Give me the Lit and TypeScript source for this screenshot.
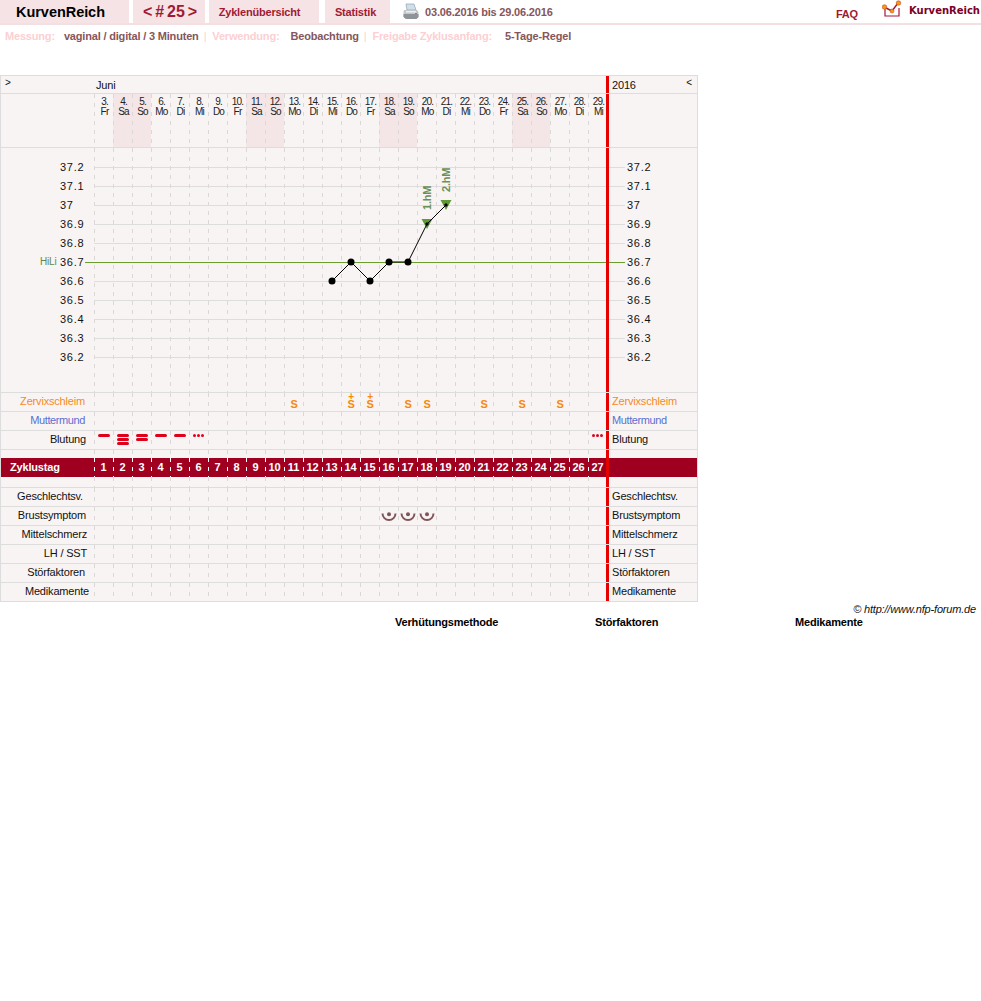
import {LitElement, html, svg, css, nothing} from 'lit';
import {customElement} from 'lit/decorators.js';

const DAY_NAMES = ['Fr', 'Sa', 'So', 'Mo', 'Di', 'Mi', 'Do'];
const COL = 19;
const COL_X = 94;

// the cycle runs from the 3rd to the 29th of june
const days = Array.from({length: 27}, (_, i) => ({
    cycle: i + 1,
    date: i + 3,
    name: DAY_NAMES[i % 7],
    weekend: i % 7 === 1 || i % 7 === 2,
}));

const temps = ['37.2', '37.1', '37', '36.9', '36.8', '36.7', '36.6', '36.5', '36.4', '36.3', '36.2'];
const tempY = (i: number) => 167 + i * COL;
const colCenter = (cycle: number) => COL_X + (cycle - 1) * COL + 10;

const curve: [number, number][] = [[13, 6], [14, 5], [15, 6], [16, 5], [17, 5], [18, 3], [19, 2]];
const slime: Record<number, boolean> = {11: false, 14: true, 15: true, 17: false, 18: false, 21: false, 23: false, 25: false};
const bleeding: Record<number, number | 'spot'> = {1: 1, 2: 3, 3: 2, 4: 1, 5: 1, 6: 'spot', 27: 'spot'};

const lowerRows = [
    {name: 'Geschlechtsv.', pad: 10},
    {name: 'Brustsymptom', pad: 7, marks: [16, 17, 18]},
    {name: 'Mittelschmerz', pad: 6},
    {name: 'LH / SST', pad: 6},
    {name: 'Störfaktoren', pad: 8},
    {name: 'Medikamente', pad: 4},
];

@customElement('app-root')
export class AppRoot extends LitElement {
    static styles = css`
        :host {
            display: block;
            font-family: "Liberation Sans", Arial, sans-serif;
            font-size: 11px;
            letter-spacing: -0.18px;
            color: #111;
            background: #fff;
        }

        .top {
            display: flex;
            height: 23px;
            border-bottom: 2px solid #f3e0e3;
        }

        .tab {
            display: flex;
            align-items: center;
            justify-content: center;
            background: #f5e3e6;
            font-weight: bold;
            color: #a01a33;
        }

        .brand { width: 129px; margin-right: 4px; color: #000; font-size: 14.5px; letter-spacing: -0.05px; padding-right: 8px; box-sizing: border-box; }
        .cycle { width: 72px; margin-right: 4px; padding-left: 2px; box-sizing: border-box; font-size: 16px; letter-spacing: 0; word-spacing: -1.5px; }
        .overview { width: 110px; margin-right: 6px; padding-right: 9px; box-sizing: border-box; }
        .stats { width: 65px; padding-right: 4px; box-sizing: border-box; }

        .printer { margin: 3px 0 0 13px; }

        .range {
            margin-left: 6px;
            line-height: 24px;
            font-weight: bold;
            color: #85565c;
        }

        .faq {
            margin-left: auto;
            line-height: 29px;
            font-weight: bold;
            color: #a01a33;
        }

        .logo { margin: 0 0 0 24px; }

        .logoText {
            margin: 0 1px 0 7px;
            line-height: 21px;
            font-family: "DejaVu Sans", sans-serif;
            font-size: 10px;
            letter-spacing: 0;
            font-weight: bold;
            color: #7b0025;
        }

        .meta {
            display: flex;
            height: 50px;
            padding: 5px 0 0 5px;
            box-sizing: border-box;
            line-height: 13px;
            font-weight: bold;
            color: #85565c;
        }

        .metaLabel { color: #fcd0d2; margin-right: 9px; }
        .metaLabel.wide { margin-right: 11px; }
        .metaLabel.widest { margin-right: 13px; }
        .pipe { color: #fcd0d2; font-weight: normal; margin: 0 6px 0 5px; }

        .chart {
            width: 698px;
            box-sizing: border-box;
            background: #f9f4f4;
            border: 1px solid #ddd;
            border-width: 1px 1px 0;
        }

        .row {
            display: flex;
            height: 19px;
            box-sizing: border-box;
            border-bottom: 1px solid #ddd;
            line-height: 17px;
        }

        .months { height: 18px; line-height: 18px; }
        .dates { height: 54px; }
        .spacer { height: 8px; border-bottom: 0; }
        .spacerLow { height: 11px; }
        .plot { display: block; height: 245px; }
        .plot svg { display: block; }

        .label {
            flex: 0 0 93px;
            box-sizing: border-box;
            text-align: right;
        }

        .arrow { padding-left: 4px; text-align: left; line-height: 14px; font-size: 10px; }

        .days {
            flex: 0 0 512px;
            display: flex;
            overflow: hidden;
        }

        .month { padding-left: 2px; }

        .cell {
            flex: 0 0 19px;
            box-sizing: border-box;
            background: linear-gradient(#dbd8d8 0 4px, transparent 4px) 0 0 / 1px 9px repeat-y;
        }

        .date {
            padding: 3px 0 0 2px;
            text-align: center;
            font-size: 10px;
            line-height: 10px;
            letter-spacing: -0.8px;
            color: #222;
        }

        .weekend { background-color: #f4e5e7; }

        .red {
            flex: 0 0 3px;
            background: #e60000;
        }

        .right {
            flex: 1;
            display: flex;
            justify-content: space-between;
            padding: 0 5px 0 3px;
        }

        .orange { color: #f58a1f; }
        .blue { color: #5a6fd0; letter-spacing: -0.4px; }

        .slime {
            display: flex;
            flex-direction: column;
            align-items: center;
            justify-content: flex-end;
            padding: 0 0 2px 1px;
            font-weight: bold;
            color: #f58a0b;
        }

        .slime b { font-size: 10px; line-height: 7px; }
        .slime span { line-height: 9px; }

        .blood {
            display: flex;
            flex-direction: column;
            gap: 1px;
            padding: 3px 0 0 4px;
        }

        .bar {
            width: 12px;
            height: 3px;
            border-radius: 2px;
            background: #e0001a;
        }

        .spots { display: flex; gap: 1px; }
        .spots i { width: 3px; height: 3px; border-radius: 50%; background: #e0001a; }

        .breast { display: block; }

        .cycleBar {
            border-bottom: 0;
            background: #a00020;
            color: #fff;
            font-weight: bold;
            line-height: 19px;
        }

        .cycleBar .label { padding-left: 9px; text-align: left; }

        .cycleBar .cell {
            text-align: center;
            background-image: linear-gradient(#fff 0 4px, transparent 4px);
        }

        .credit {
            padding: 1px 5px 0 0;
            line-height: 12px;
            text-align: right;
            font-style: italic;
        }

        .legend {
            display: flex;
            padding: 1px 0 0 395px;
            line-height: 13px;
            font-weight: bold;
            color: #000;
        }

        .legend div { flex: 0 0 200px; }

        .tick { font-size: 11px; letter-spacing: 0.7px; fill: #111; }
    `;

    renderPlot() {
        const lines = days.map((_, i) => COL_X + i * COL + 0.5);
        const path = curve.map(([c, t]) => `${colCenter(c)},${tempY(t)}`).join(' ');
        return html`
            <svg width="696" height="244" viewBox="1 148 696 244">
                ${lines.map(x => svg`<line x1=${x} x2=${x} y1="148" y2="392" stroke="#dbd8d8" stroke-dasharray="4 5"/>`)}
                ${temps.map((t, i) => svg`
                    <line x1="94" x2="625" y1=${tempY(i) + 0.5} y2=${tempY(i) + 0.5}
                        stroke=${t === '36.7' ? 'none' : '#ddd'}/>
                    <text class="tick" x="60" y=${tempY(i) + 4}>${t}</text>
                    <text class="tick" x="627" y=${tempY(i) + 4}>${t}</text>
                `)}
                <line x1="85" x2="625" y1="262.5" y2="262.5" stroke="#6a9e2f"/>
                <text x="40" y="265" font-size="10" fill="#5f8a4a">HiLi</text>
                <rect x="606" y="148" width="3" height="244" fill="#e60000"/>
                <path d="M421.5 219h11l-5.500 10zM440.500 200h11l-5.500 10z" fill="#5f9a35"/>
                <polyline points=${path} fill="none" stroke="#000"/>
                ${curve.slice(0, 5).map(([c, t]) => svg`<circle cx=${colCenter(c)} cy=${tempY(t)} r="3.500" fill="#000"/>`)}
                <path d="M427 222l2 2-2 2-2-2zM446 203l2 2-2 2-2-2z" fill="#000"/>
                <text transform="translate(431 210) rotate(-90)" font-size="11" font-weight="bold" fill="#6a9058">1.hM</text>
                <text transform="translate(450 192) rotate(-90)" font-size="11" font-weight="bold" fill="#6a9058">2.hM</text>
            </svg>
        `;
    }

    renderBlood(cycle: number) {
        const mark = bleeding[cycle];
        if (!mark) return nothing;
        if (mark === 'spot') return html`<div class="spots"><i></i><i></i><i></i></div>`;
        return Array.from({length: mark}, () => html`<div class="bar"></div>`);
    }

    renderBreast() {
        return html`
            <svg class="breast" width="19" height="18" viewBox="0 0 19 18">
                <path d="M3.500 6.500A6.500 6.500 0 0 0 16.500 6.500" fill="none" stroke="#80555a" stroke-width="2"/>
                <circle cx="10" cy="7.300" r="2" fill="#80555a"/>
            </svg>
        `;
    }

    render() {
        return html`
            <div class="top">
                <div class="tab brand">KurvenReich</div>
                <div class="tab cycle">&lt; # 25 &gt;</div>
                <div class="tab overview">Zyklenübersicht</div>
                <div class="tab stats">Statistik</div>
                <svg class="printer" width="16" height="17" viewBox="0 0 16 17">
                    <path d="M3 1h8l2 6H4z" fill="#cfe0ea" stroke="#8fa3b0" stroke-width=".7"/>
                    <path d="M1 7h13l1.500 2v5l-2 2H3l-2.500-2V9z" fill="#c4c8ca"/>
                    <path d="M.5 11h15v3l-2 2H3l-2.500-2z" fill="#8f9498"/>
                    <rect x="3" y="8" width="10" height="1.500" fill="#eceeef"/>
                    <rect x="12" y="10" width="2" height="1" fill="#52b05a"/>
                </svg>
                <div class="range">03.06.2016 bis 29.06.2016</div>
                <div class="faq">FAQ</div>
                <svg class="logo" width="20" height="18" viewBox="0 0 20 18">
                    <path d="M3 9v7h14V8" fill="none" stroke="#a8143c" stroke-width="1.200"/>
                    <polyline points="2,7 10,11 16,3" fill="none" stroke="#a8143c" stroke-width="1.400"/>
                    <circle cx="2.500" cy="7" r="2.300" fill="#f59a0b" stroke="#c0392b" stroke-width=".5"/>
                    <circle cx="10" cy="11" r="2" fill="#f59a0b" stroke="#c0392b" stroke-width=".5"/>
                    <circle cx="16.500" cy="3" r="2.300" fill="#f59a0b" stroke="#c0392b" stroke-width=".5"/>
                </svg>
                <div class="logoText">KurvenReich</div>
            </div>

            <div class="meta">
                <span class="metaLabel">Messung:</span>
                <span>vaginal / digital / 3 Minuten</span>
                <span class="pipe">|</span>
                <span class="metaLabel wide">Verwendung:</span>
                <span>Beobachtung</span>
                <span class="pipe">|</span>
                <span class="metaLabel widest">Freigabe Zyklusanfang:</span>
                <span>5-Tage-Regel</span>
            </div>

            <div class="chart">
                <div class="row months">
                    <div class="label arrow">&gt;</div>
                    <div class="days"><span class="month">Juni</span></div>
                    <div class="red"></div>
                    <div class="right"><span>2016</span><span class="arrow">&lt;</span></div>
                </div>

                <div class="row dates">
                    <div class="label"></div>
                    <div class="days">
                        ${days.map(d => html`
                            <div class="cell date ${d.weekend ? 'weekend' : ''}">${d.date}.<br>${d.name}</div>
                        `)}
                    </div>
                    <div class="red"></div>
                    <div class="right"></div>
                </div>

                <div class="row plot">${this.renderPlot()}</div>

                <div class="row">
                    <div class="label orange" style="padding-right:9px">Zervixschleim</div>
                    <div class="days">
                        ${days.map(d => html`
                            <div class="cell slime">
                                ${slime[d.cycle] ? html`<b>+</b>` : nothing}
                                ${d.cycle in slime ? html`<span>S</span>` : nothing}
                            </div>
                        `)}
                    </div>
                    <div class="red"></div>
                    <div class="right orange">Zervixschleim</div>
                </div>

                <div class="row">
                    <div class="label blue" style="padding-right:9px">Muttermund</div>
                    <div class="days">${days.map(() => html`<div class="cell"></div>`)}</div>
                    <div class="red"></div>
                    <div class="right blue">Muttermund</div>
                </div>

                <div class="row">
                    <div class="label" style="padding-right:8px">Blutung</div>
                    <div class="days">
                        ${days.map(d => html`<div class="cell blood">${this.renderBlood(d.cycle)}</div>`)}
                    </div>
                    <div class="red"></div>
                    <div class="right">Blutung</div>
                </div>

                <div class="row spacer">
                    <div class="label"></div>
                    <div class="days">${days.map(() => html`<div class="cell"></div>`)}</div>
                    <div class="red"></div>
                </div>

                <div class="row cycleBar">
                    <div class="label">Zyklustag</div>
                    <div class="days">${days.map(d => html`<div class="cell">${d.cycle}</div>`)}</div>
                    <div class="red"></div>
                </div>

                <div class="row spacerLow">
                    <div class="label"></div>
                    <div class="days">${days.map(() => html`<div class="cell"></div>`)}</div>
                    <div class="red"></div>
                </div>

                ${lowerRows.map(r => html`
                    <div class="row">
                        <div class="label" style="padding-right:${r.pad + 1}px">${r.name}</div>
                        <div class="days">
                            ${days.map(d => html`
                                <div class="cell">${r.marks?.includes(d.cycle) ? this.renderBreast() : nothing}</div>
                            `)}
                        </div>
                        <div class="red"></div>
                        <div class="right">${r.name}</div>
                    </div>
                `)}
            </div>

            <div class="credit">© http://www.nfp-forum.de</div>
            <div class="legend">
                <div>Verhütungsmethode</div>
                <div>Störfaktoren</div>
                <div>Medikamente</div>
            </div>
        `;
    }
}
